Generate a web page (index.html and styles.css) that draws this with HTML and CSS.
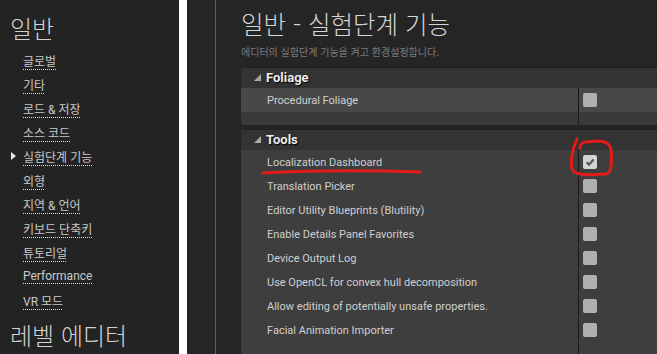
FILE: index.html
```html
<!DOCTYPE html>
<html lang="ko">
<head>
  <meta charset="UTF-8">
  <meta name="viewport" content="width=device-width, initial-scale=1.0">
  <title>Editor Preferences</title>
  <link rel="stylesheet" href="styles.css">
</head>
<body>

  <div class="page">
    <!-- Left category list -->
    <aside class="sidebar">
      <h2 class="side-title">일반</h2>
      <ul class="side-list">
        <li class="side-item"><span class="marker"></span><a href="#">글로벌</a></li>
        <li class="side-item"><span class="marker"></span><a href="#">기타</a></li>
        <li class="side-item"><span class="marker"></span><a href="#">로드 &amp; 저장</a></li>
        <li class="side-item"><span class="marker"></span><a href="#">소스 코드</a></li>
        <li class="side-item active"><span class="marker"></span><a href="#">실험단계 기능</a></li>
        <li class="side-item"><span class="marker"></span><a href="#">외형</a></li>
        <li class="side-item"><span class="marker"></span><a href="#">지역 &amp; 언어</a></li>
        <li class="side-item"><span class="marker"></span><a href="#">키보드 단축키</a></li>
        <li class="side-item"><span class="marker"></span><a href="#">튜토리얼</a></li>
        <li class="side-item"><span class="marker"></span><a href="#">Performance</a></li>
        <li class="side-item"><span class="marker"></span><a href="#">VR 모드</a></li>
      </ul>
      <h2 class="side-title next">레벨 에디터</h2>
    </aside>

    <div class="splitter"></div>
    <div class="gutter"></div>

    <!-- Settings for the selected category -->
    <main class="main">
      <h1 class="page-title">일반 - 실험단계 기능</h1>
      <p class="page-desc">에디터의 실험단계 기능을 켜고 환경설정합니다.</p>

      <section class="category">
        <div class="cat-header">
          <svg class="cat-arrow" width="7" height="7" viewBox="0 0 7 7"><path d="M7 0 L7 7 L0 7 Z" fill="#a8a8a8"/></svg>
          Foliage
        </div>
        <div class="prop-row hover">
          <div class="prop-name">Procedural Foliage</div>
          <div class="prop-value"><span class="checkbox"></span></div>
        </div>
        <div class="prop-row footer">
          <div class="prop-name"></div>
          <div class="prop-value"></div>
        </div>
      </section>

      <section class="category">
        <div class="cat-header">
          <svg class="cat-arrow" width="7" height="7" viewBox="0 0 7 7"><path d="M7 0 L7 7 L0 7 Z" fill="#a8a8a8"/></svg>
          Tools
        </div>
        <div class="prop-row">
          <div class="prop-name">Localization Dashboard</div>
          <div class="prop-value">
            <span class="checkbox checked">
              <svg width="14" height="14" viewBox="0 0 14 14"><path d="M3.5 7.2 L6 9.6 L10.6 4.4" fill="none" stroke="#5a5a5a" stroke-width="2.2"/></svg>
            </span>
          </div>
        </div>
        <div class="prop-row">
          <div class="prop-name">Translation Picker</div>
          <div class="prop-value"><span class="checkbox"></span></div>
        </div>
        <div class="prop-row">
          <div class="prop-name">Editor Utility Blueprints (Blutility)</div>
          <div class="prop-value"><span class="checkbox"></span></div>
        </div>
        <div class="prop-row">
          <div class="prop-name">Enable Details Panel Favorites</div>
          <div class="prop-value"><span class="checkbox"></span></div>
        </div>
        <div class="prop-row">
          <div class="prop-name">Device Output Log</div>
          <div class="prop-value"><span class="checkbox"></span></div>
        </div>
        <div class="prop-row">
          <div class="prop-name">Use OpenCL for convex hull decomposition</div>
          <div class="prop-value"><span class="checkbox"></span></div>
        </div>
        <div class="prop-row">
          <div class="prop-name">Allow editing of potentially unsafe properties.</div>
          <div class="prop-value"><span class="checkbox"></span></div>
        </div>
        <div class="prop-row">
          <div class="prop-name">Facial Animation Importer</div>
          <div class="prop-value"><span class="checkbox"></span></div>
        </div>
        <div class="prop-row">
          <div class="prop-name"></div>
          <div class="prop-value"></div>
        </div>
      </section>
    </main>

    <!-- Red hand-drawn marks on top of the screenshot -->
    <svg class="ink" width="657" height="354" viewBox="0 0 657 354">
      <path d="M263 173 C300 171 360 170 420 172" fill="none" stroke="#e31b1b" stroke-width="3" stroke-linecap="round"/>
      <path d="M577 139 C573 148 570 160 572 169 C574 176 590 175 606 174 C612 173 612 160 611 150 C610 143 605 141 598 141 L586 142 C582 142 580 145 580 148" fill="none" stroke="#e31b1b" stroke-width="3" stroke-linecap="round" stroke-linejoin="round"/>
    </svg>
  </div>

</body>
</html>
```

FILE: styles.css
```css
html, body {
  margin: 0;
  padding: 0;
}
body {
  background-color: #252525;
  font-family: Roboto, "Noto Sans CJK KR", sans-serif;
  color: #c8c8c8;
  overflow: hidden;
}
.page {
  position: relative;
  display: flex;
  width: 657px;
  height: 354px;
  overflow: hidden;
}

/* sidebar */
.sidebar {
  width: 179px;
  flex-shrink: 0;
  background-color: #232323;
  padding: 10px 0 0 10px;
  box-sizing: border-box;
}
.side-title {
  margin: 0;
  font-family: "Noto Sans CJK KR", sans-serif;
  font-size: 24px;
  font-weight: 300;
  line-height: 36px;
  color: #d2d2d2;
}
.side-title.next {
  margin-top: 5px;
}
.side-list {
  list-style: none;
  margin: 2px 0 0 0;
  padding: 0;
}
.side-item {
  display: flex;
  align-items: center;
  height: 24px;
  font-size: 12px;
}
.side-item .marker {
  width: 13px;
  flex-shrink: 0;
}
.side-item.active .marker::before {
  content: "";
  display: block;
  width: 0;
  height: 0;
  border-top: 4px solid transparent;
  border-bottom: 4px solid transparent;
  border-left: 5px solid #e8e8e8;
  margin-left: 1px;
}
.side-item a {
  color: #c8c8c8;
  text-decoration: underline dotted #e0e0e0;
  text-decoration-thickness: 1px;
  text-underline-offset: 3px;
}

.splitter {
  width: 8px;
  flex-shrink: 0;
  background-color: #ffffff;
}
.gutter {
  width: 28px;
  flex-shrink: 0;
  background-color: #252525;
  border-right: 1px solid #5e5e5e;
}

/* main panel */
.main {
  flex: 1;
  padding: 8px 0 0 25px;
  min-width: 0;
}
.page-title {
  margin: 0;
  font-family: "Noto Sans CJK KR", sans-serif;
  font-size: 24.5px;
  font-weight: 300;
  line-height: 32px;
  color: #d6d6d6;
  white-space: nowrap;
}
.page-desc {
  margin: 4px 0 0 0;
  font-family: "Noto Sans CJK KR", sans-serif;
  font-size: 10px;
  line-height: 16px;
  color: #7c7c7c;
  white-space: nowrap;
}

.category {
  margin-top: 7px;
  margin-right: -12px;
  background-color: #3e3e3e;
  border-radius: 4px;
  overflow: hidden;
}
.category + .category {
  margin-top: 4px;
}
.cat-header {
  display: flex;
  align-items: center;
  height: 21px;
  padding-left: 13px;
  padding-bottom: 1px;
  background-color: #333333;
  border-top: 1px solid #1e1e1e;
  box-sizing: border-box;
  font-size: 13px;
  font-weight: bold;
  color: #ececec;
  text-shadow: 1px 1px 1px #000;
}
.cat-arrow {
  margin-right: 5px;
}

.prop-row {
  display: grid;
  grid-template-columns: 337px 1fr;
  height: 24px;
  font-size: 11px;
  color: #cfcfcf;
}
.prop-row.hover {
  background-color: #484848;
}
.prop-row.footer {
  height: 13px;
  background-color: #3a3a3a;
}
.prop-name {
  display: flex;
  align-items: center;
  padding-left: 26px;
  white-space: nowrap;
  overflow: hidden;
}
.prop-value {
  display: flex;
  align-items: center;
  padding-left: 4px;
  border-left: 1px solid #1a1a1a;
}
.checkbox {
  display: block;
  width: 14px;
  height: 14px;
  border-radius: 2px;
  background-color: #b0b0b0;
}
.checkbox.checked {
  background-color: #d4d4d4;
}
.checkbox svg {
  display: block;
}

.ink {
  position: absolute;
  left: 0;
  top: 0;
  pointer-events: none;
}
```
